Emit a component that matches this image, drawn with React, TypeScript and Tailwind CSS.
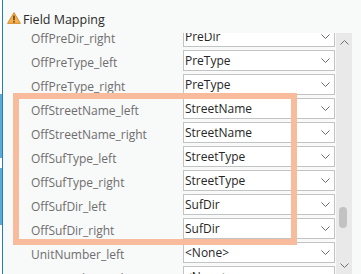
import React from 'react';

const rows: [string, string][] = [
  ['OffPreDir_right', 'PreDir'],
  ['OffPreType_left', 'PreType'],
  ['OffPreType_right', 'PreType'],
  ['OffStreetName_left', 'StreetName'],
  ['OffStreetName_right', 'StreetName'],
  ['OffSufType_left', 'StreetType'],
  ['OffSufType_right', 'StreetType'],
  ['OffSufDir_left', 'SufDir'],
  ['OffSufDir_right', 'SufDir'],
  ['UnitNumber_left', '<None>'],
  ['UnitNumber_right', '<None>'],
];

const Chevron = ({ color = '#6b6b6b' }: { color?: string }) => (
  <svg width="9" height="5" viewBox="0 0 9 5" fill="none">
    <path d="M0.5 0.5 L4.5 4.5 L8.5 0.5" stroke={color} strokeWidth="1" />
  </svg>
);

const WarningIcon = () => (
  <svg width="14" height="12" viewBox="0 0 14 12">
    <path d="M7 0.6 L13.4 11.4 L0.6 11.4 Z" fill="#f6b14a" stroke="#d4862a" strokeWidth="0.9" strokeLinejoin="round" />
    <rect x="6.3" y="3.6" width="1.4" height="4.6" fill="#4a3010" />
    <rect x="6.3" y="9.1" width="1.4" height="1.4" fill="#4a3010" />
  </svg>
);

export default function App() {
  return (
    <div
      className="relative flex w-[361px] h-[274px] overflow-hidden bg-[#f8f9f9]"
      style={{ fontFamily: '"Open Sans", "Noto Sans", sans-serif' }}
    >
      {/* window edge behind the pane */}
      <div className="flex w-[2px] flex-col bg-white">
        <div className="h-[94px]" />
        <div className="h-[64px] bg-[#5aa9d6]" />
        <div className="h-[10px]" />
        <div className="h-[57px] bg-[#5aa9d6]" />
      </div>
      <div className="w-px bg-[#1f7ad0]" />

      <div className="flex flex-1 flex-col">
        {/* header */}
        <div className="flex h-[33px] items-start pl-[4px] pt-[12px]">
          <WarningIcon />
          <span className="ml-[2px] mt-[1px] text-[12.5px] leading-[14px] text-[#2b2b2b]">Field Mapping</span>
        </div>

        <div className="flex flex-1 overflow-hidden">
          {/* rows */}
          <div className="w-[333px] overflow-hidden">
            <div className="-mt-[7px]">
              {rows.map(([label, value]) => (
                <div key={label} className="flex h-[24px] items-start">
                  <div className="w-[180px] pl-[28px] pt-[2px] text-[12px] leading-[21px] text-[#6e6e6e]">{label}</div>
                  <div className="flex h-[21px] w-[152px] items-center justify-between border border-[#c3c3c3] bg-white pl-[1px] pr-[4px]">
                    <span className="text-[12px] leading-[19px] text-[#262626]">{value}</span>
                    <Chevron />
                  </div>
                </div>
              ))}
            </div>
          </div>

          {/* scrollbar */}
          <div className="flex w-[16px] flex-col bg-[#e9e9e9]">
            <div className="flex h-[18px] items-center justify-center">
              <svg width="9" height="5" viewBox="0 0 9 5" fill="none">
                <path d="M0.5 4.5 L4.5 0.5 L8.5 4.5" stroke="#707070" strokeWidth="1" />
              </svg>
            </div>
            <div className="flex-1 pl-[3px] pt-[156px]">
              <div className="h-[21px] w-[8px] rounded-[4px] bg-[#c2c2c2]" />
            </div>
            <div className="flex h-[18px] items-center justify-center">
              <Chevron color="#707070" />
            </div>
          </div>
          <div className="flex-1" />
        </div>
      </div>

      {/* highlight annotation */}
      <div className="pointer-events-none absolute left-[13px] top-[93px] h-[152px] w-[284px] border-[6px] border-[#f8bb9c]" />
    </div>
  );
}
